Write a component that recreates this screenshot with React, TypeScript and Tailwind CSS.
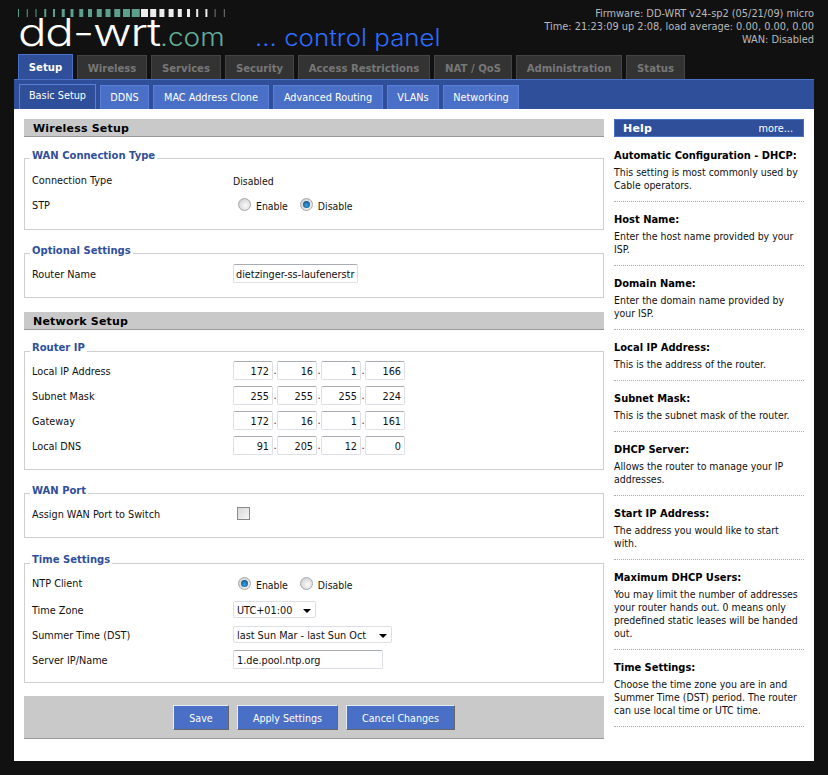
const mainTabs = [
  { label: "Setup", w: "w-[55px]", active: true },
  { label: "Wireless", w: "w-[70px]" },
  { label: "Services", w: "w-[70px]" },
  { label: "Security", w: "w-[69px]" },
  { label: "Access Restrictions", w: "w-[132px]" },
  { label: "NAT / QoS", w: "w-[78px]" },
  { label: "Administration", w: "w-[106px]" },
  { label: "Status", w: "w-[59px]" },
];

const subTabs = [
  { label: "Basic Setup", w: "w-[77px]", active: true },
  { label: "DDNS", w: "w-[49px]" },
  { label: "MAC Address Clone", w: "w-[116px]" },
  { label: "Advanced Routing", w: "w-[110px]" },
  { label: "VLANs", w: "w-[52px]" },
  { label: "Networking", w: "w-[76px]" },
];

const helpItems = [
  { title: "Automatic Configuration - DHCP:", body: "This setting is most commonly used by Cable operators." },
  { title: "Host Name:", body: "Enter the host name provided by your ISP." },
  { title: "Domain Name:", body: "Enter the domain name provided by your ISP." },
  { title: "Local IP Address:", body: "This is the address of the router." },
  { title: "Subnet Mask:", body: "This is the subnet mask of the router." },
  { title: "DHCP Server:", body: "Allows the router to manage your IP addresses." },
  { title: "Start IP Address:", body: "The address you would like to start with." },
  { title: "Maximum DHCP Users:", body: "You may limit the number of addresses your router hands out. 0 means only predefined static leases will be handed out." },
  { title: "Time Settings:", body: "Choose the time zone you are in and Summer Time (DST) period. The router can use local time or UTC time." },
];

const ipRows = [
  { label: "Local IP Address", parts: ["172", "16", "1", "166"] },
  { label: "Subnet Mask", parts: ["255", "255", "255", "224"] },
  { label: "Gateway", parts: ["172", "16", "1", "161"] },
  { label: "Local DNS", parts: ["91", "205", "12", "0"] },
];

// widths of the strip of bars above the logo, thin -> thick -> thin
const stripTeal = [1, 1, 1, 2, 2, 3, 3, 4, 4, 5, 5, 6, 7, 8];
const stripWhite = [7, 6, 5, 5, 4, 3, 2, 2, 1, 1];

const Radio = ({ on }: { on?: boolean }) => (
  <span className="relative inline-block h-[13px] w-[13px] rounded-full border border-[#a4a8ae] bg-[radial-gradient(circle_at_60%_60%,#fbfbfb_0,#e2e2e2_50%,#c4c4c4_100%)]">
    {on && <span className="absolute left-[2px] top-[2px] h-[7px] w-[7px] rounded-full bg-[radial-gradient(circle_at_50%_60%,#3aa6ea_0,#14588f_70%)]" />}
  </span>
);

const TextBox = ({ value, className }: { value: string; className: string }) => (
  <div className={`h-[19px] overflow-hidden whitespace-nowrap rounded-[2px] border border-[#dcdfe6] border-t-[#a9acb4] bg-white leading-[20px] ${className}`}>{value}</div>
);

const Dropdown = ({ value, className }: { value: string; className: string }) => (
  <div className={`flex h-[17px] items-center justify-between rounded-[2px] border border-[#dcdfe6] bg-white pl-[3px] pr-[4px] ${className}`}>
    <span className="mt-[3px] whitespace-nowrap">{value}</span>
    <span className="mt-[2px] h-0 w-0 border-x-[4px] border-t-[4px] border-x-transparent border-t-black" />
  </div>
);

const Field = ({ title, className, legendClass, children }: { title: string; className: string; legendClass?: string; children: React.ReactNode }) => (
  <fieldset className={`mx-0 border border-[#cfcfcf] pl-[7px] ${className}`}>
    <legend className={`-ml-[2px] px-[2px] font-['DejaVu_Sans'] text-[10px] font-bold leading-[13px] text-[#2f4f9b] ${legendClass ?? "pb-[5px]"}`}>{title}</legend>
    {children}
  </fieldset>
);

const Row = ({ label, className, tall, children }: { label: string; className: string; tall?: boolean; children?: React.ReactNode }) => (
  <div className={`flex items-center ${className}`}>
    <div className={`w-[201px] whitespace-nowrap ${tall ? "pt-[4px]" : "pt-[2px]"}`}>{label}</div>
    {children}
  </div>
);

const Heading = ({ title, className }: { title: string; className?: string }) => (
  <div className={`h-[18px] border-b border-[#999] bg-[#c9c9c9] pl-[9px] pt-[1px] font-['DejaVu_Sans'] text-[11px] font-bold leading-[18px] tracking-[0.2px] text-black ${className ?? ""}`}>
    {title}
  </div>
);

const RadioPair = ({ enabled, className }: { enabled: boolean; className: string }) => (
  <div className={`ml-[5px] flex items-center gap-[5px] text-[10.4px] ${className}`}>
    <Radio on={enabled} />
    <span className="mr-[7px] mt-[6px]">Enable</span>
    <Radio on={!enabled} />
    <span className="mt-[6px]">Disable</span>
  </div>
);

export default function App() {
  return (
    <div className="h-[775px] w-[828px] overflow-hidden bg-[#111111] font-['DejaVu_Sans_Condensed','Liberation_Sans',sans-serif] text-[10.8px] text-[#111]">
      <div className="flex h-[54px] justify-between pl-[18px] pr-[14px]">
        <div className="flex flex-col">
          <svg width="207" height="8" className="mt-[9px]" viewBox="0 0 207 8">
            {stripTeal.map((w, i) => <rect key={i} x={i * 8.75} y="0" width={w} height="8" fill="#5c9f8c" />)}
            {stripWhite.map((w, i) => <rect key={i} x={123 + i * 9.2} y="0" width={w} height="8" fill={i < 8 ? "#ececec" : "#777"} />)}
          </svg>
          <div className="mt-[-4px] flex h-[38px] items-baseline whitespace-nowrap font-['Inter']">
            <span className="inline-block w-[142px] origin-left scale-x-[1.25] text-[38px] font-light leading-[38px] tracking-[-1px] text-white">dd-wrt</span>
            <span className="inline-block w-[65px] origin-left scale-x-[1.12] text-[25px] font-light leading-[38px] text-[#63ad98]">.com</span>
            <span className="ml-[30px] inline-block origin-left scale-x-[1.1] text-[23.5px] font-light leading-[38px] text-[#2f6bff]">... control panel</span>
          </div>
        </div>
        <div className="pt-[7px] text-right text-[10.9px] leading-[13px] text-[#b9b9b9]">
          <div>Firmware: DD-WRT v24-sp2 (05/21/09) micro</div>
          <div>Time: 21:23:09 up 2:08, load average: 0.00, 0.00, 0.00</div>
          <div>WAN: Disabled</div>
        </div>
      </div>

      <div className="flex h-[25px] gap-[4px] pl-[18px]">
        {mainTabs.map((t) => (
          <div
            key={t.label}
            className={`flex items-center justify-center border border-b-0 pt-[2px] font-['DejaVu_Sans'] text-[10.1px] font-bold ${t.w} ${
              t.active ? "h-[25px] border-[#4a6fc6] bg-[#2f4f9b] text-white" : "mt-[1px] h-[24px] border-[#444] bg-[#333] text-[#777]"
            }`}
          >
            {t.label}
          </div>
        ))}
      </div>

      <div className="mx-[14px] flex h-[30px] items-end gap-[4px] border-t border-[#4a6fc6] bg-[#2f4f9b] pl-[5px]">
        {subTabs.map((t) => (
          <div
            key={t.label}
            className={`flex items-center justify-center border border-b-0 border-[#5a7fd6] text-white ${t.w} ${
              t.active ? "h-[25px] bg-[#2f4f9b] pb-[1px]" : "h-[24px] bg-[#4a6fc6] pt-[1px]"
            }`}
          >
            {t.label}
          </div>
        ))}
      </div>

      <div className="mx-[14px] flex h-[652px] gap-[10px] bg-white pl-[10px] pt-[10px]">
        <div className="w-[580px]">
          <Heading title="Wireless Setup" />
          <Field title="WAN Connection Type" className="mt-[12px] h-[81px] pt-[7px]">
            <Row label="Connection Type" className="h-[13px]">
              <span className="pt-[2px] text-[10.4px]">Disabled</span>
            </Row>
            <Row label="STP" className="mt-[12px] h-[13px]">
              <RadioPair enabled={false} className="-mt-[3px]" />
            </Row>
          </Field>

          <Field title="Optional Settings" className="mt-[14px] h-[54px] pt-[2px]">
            <Row label="Router Name" tall className="h-[19px]">
              <TextBox value="dietzinger-ss-laufenerstr" className="w-[125px] pl-[2px]" />
            </Row>
          </Field>

          <Heading title="Network Setup" className="mt-[14px]" />
          <Field title="Router IP" legendClass="pb-[7px]" className="mt-[11px] h-[129px] pt-[0px]">
            {ipRows.map((r, i) => (
              <Row key={r.label} label={r.label} tall className={`h-[19px] ${i > 0 ? "mt-[6px]" : ""}`}>
                <div className="flex items-end">
                  {r.parts.map((p, j) => (
                    <div key={j} className="flex items-end">
                      <TextBox value={p} className="w-[40px] pr-[3px] text-right" />
                      {j < 3 && <span className="w-[4px] pb-[3px] text-center leading-[13px] text-[#1a1a5a]">.</span>}
                    </div>
                  ))}
                </div>
              </Row>
            ))}
          </Field>

          <Field title="WAN Port" className="mt-[14px] h-[54px] pt-[5px]">
            <Row label="Assign WAN Port to Switch" tall className="h-[13px]">
              <span className="ml-[4px] h-[13px] w-[13px] border border-[#8a8a8a] bg-gradient-to-br from-[#d8d8d8] to-[#f6f6f6]" />
            </Row>
          </Field>

          <Field title="Time Settings" legendClass="pb-[7px]" className="mt-[15px] h-[130px] pt-[4px]">
            <Row label="NTP Client" className="h-[13px]">
              <RadioPair enabled className="-mt-[1px]" />
            </Row>
            <Row label="Time Zone" tall className="mt-[11px] h-[17px]">
              <Dropdown value="UTC+01:00" className="w-[83px]" />
            </Row>
            <Row label="Summer Time (DST)" tall className="mt-[8px] h-[17px]">
              <Dropdown value="last Sun Mar - last Sun Oct" className="w-[159px]" />
            </Row>
            <Row label="Server IP/Name" tall className="mt-[7px] h-[19px]">
              <TextBox value="1.de.pool.ntp.org" className="w-[150px] pl-[3px]" />
            </Row>
          </Field>

          <div className="mt-[13px] flex h-[43px] justify-center gap-[8px] border-b border-[#999] bg-[#c9c9c9] pt-[9px]">
            {["Save", "Apply Settings", "Cancel Changes"].map((b, i) => (
              <div
                key={b}
                className={`flex h-[25px] items-center justify-center border border-[#e8ecf6] border-b-[#666] border-r-[#666] bg-[#4a6fc6] pt-[3px] text-[10.6px] text-white ${
                  i === 0 ? "w-[56px]" : i === 1 ? "w-[101px]" : "w-[109px]"
                }`}
              >
                {b}
              </div>
            ))}
          </div>
        </div>

        <div className="w-[190px]">
          <div className="mb-[1px] flex h-[18px] items-center justify-between border border-[#4a6fc6] bg-[#2f4f9b] pl-[8px] pr-[10px] pt-[2px] text-white">
            <span className="font-['DejaVu_Sans'] text-[11px] font-bold tracking-[0.2px]">Help</span>
            <span>more...</span>
          </div>
          {helpItems.map((h) => (
            <div key={h.title} className="border-b border-dotted border-[#aaa] pb-[9px] pt-[11px] text-[10.45px] leading-[13px]">
              <div className="text-[11px] font-bold text-black">{h.title}</div>
              <div className="mt-[4px]">{h.body}</div>
            </div>
          ))}
        </div>
      </div>
    </div>
  );
}
